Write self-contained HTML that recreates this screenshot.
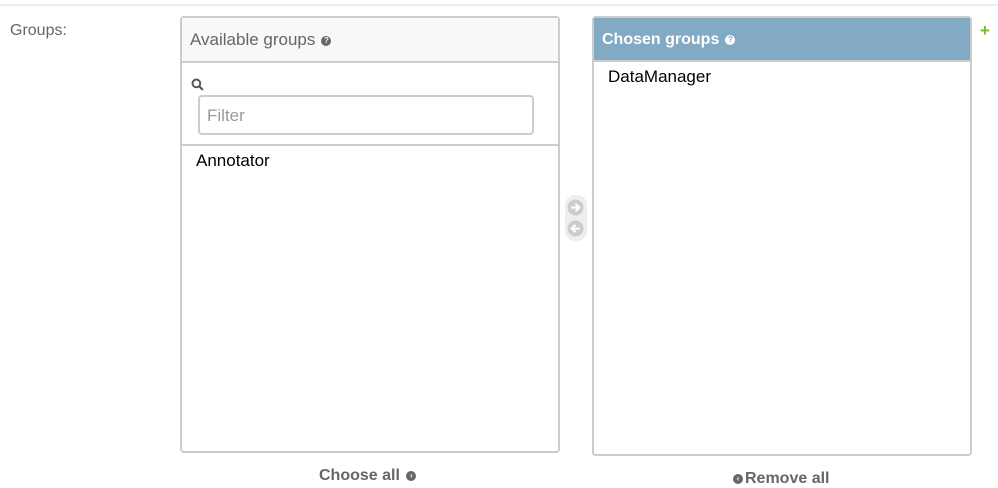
<!DOCTYPE html>
<html><head><style>
body{margin:0;width:998px;height:480px;overflow:hidden;background:#fff;font-family:"Liberation Sans",sans-serif;position:relative}
.a{position:absolute}
.box{position:absolute;border:2px solid #ccc;border-radius:4px;box-sizing:border-box;background:#fff}
.h{position:absolute;left:0;right:0;top:0;height:43px;font-size:17px;line-height:44px;padding-left:8px;box-sizing:border-box}
.q{display:inline-block;width:10px;height:10px;border-radius:50%;font-size:8px;line-height:10px;text-align:center;font-weight:bold;vertical-align:2px;margin-left:6px}
</style></head><body>
<div class="a" style="left:0;top:4px;width:998px;height:2px;background:#eee"></div>
<div class="a" style="left:10px;top:22px;font-size:16px;color:#666">Groups:</div>

<div class="box" style="left:180px;top:16px;width:380px;height:437px">
 <div class="h" style="background:#f8f8f8;color:#666;border-bottom:2px solid #ccc;height:45px">Available groups<span class="q" style="background:#666;color:#f8f8f8">?</span></div>
 <svg class="a" style="left:9px;top:60px" width="14" height="14" viewBox="0 0 13 13"><circle cx="5" cy="5" r="3.6" fill="none" stroke="#555" stroke-width="1.8"/><line x1="7.6" y1="7.6" x2="11" y2="11" stroke="#555" stroke-width="2"/></svg>
 <div class="a" style="left:16px;top:77px;width:336px;height:40px;border:2px solid #ccc;border-radius:4px;box-sizing:border-box;font-size:17px;color:#999;line-height:38px;padding-left:7px">Filter</div>
 <div class="a" style="left:0;right:0;top:126px;height:2px;background:#ccc"></div>
 <div class="a" style="left:14px;top:133px;font-size:17px;color:#000">Annotator</div>
</div>

<div class="a" style="left:565px;top:195px;width:22px;height:46px;background:#eee;border-radius:10px"></div>
<svg class="a" style="left:567px;top:199px" width="17" height="17" viewBox="0 0 16 16"><circle cx="8" cy="8" r="7.5" fill="#ccc"/><path d="M4 8h7M8 4.5L11.5 8 8 11.5" fill="none" stroke="#fff" stroke-width="2"/></svg>
<svg class="a" style="left:567px;top:220px" width="17" height="17" viewBox="0 0 16 16"><circle cx="8" cy="8" r="7.5" fill="#ccc"/><path d="M12 8H5M8 4.5L4.5 8 8 11.5" fill="none" stroke="#fff" stroke-width="2"/></svg>

<div class="box" style="left:592px;top:16px;width:380px;height:440px">
 <div class="h" style="background:#82aac4;color:#fff;height:44px;top:0;font-weight:bold;font-size:16px">Chosen groups<span class="q" style="background:#fff;color:#82aac4">?</span></div>
 <div class="a" style="left:0;right:0;top:42px;height:2px;background:#ccc"></div>
 <div class="a" style="left:14px;top:49px;font-size:17px;color:#000">DataManager</div>
</div>
<div class="a" style="left:980px;top:21px;font-size:17px;font-weight:bold;color:#70bf2b">+</div>

<div class="a" style="left:319px;top:467px;font-size:16px;font-weight:bold;color:#666">Choose all <span class="q" style="background:#666;color:#fff;margin-left:2px">›</span></div>
<div class="a" style="left:733px;top:470px;font-size:16px;font-weight:bold;color:#666"><span class="q" style="background:#666;color:#fff;margin:0 2px 0 0">‹</span>Remove all</div>
</body></html>
